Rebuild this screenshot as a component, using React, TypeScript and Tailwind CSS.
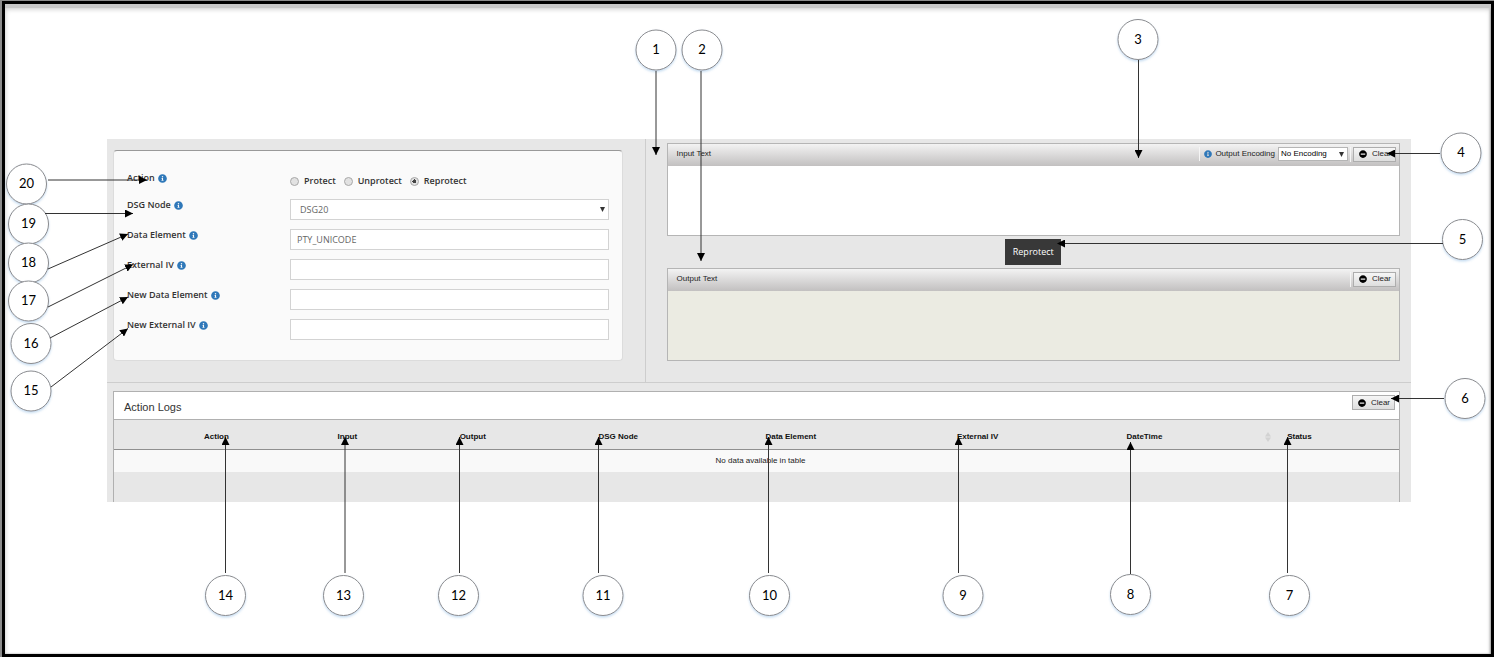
import { useState } from 'react';
import type { ReactNode } from 'react';
import { FaInfoCircle, FaMinusCircle } from 'react-icons/fa';

type Callout = {
  n: number;
  cx: number;
  cy: number;
  from: [number, number];
  to: [number, number];
};

const callouts: Callout[] = [
  { n: 1, cx: 656, cy: 50, from: [656, 71], to: [656, 155] },
  { n: 2, cx: 702, cy: 50, from: [701, 71], to: [701, 261] },
  { n: 3, cx: 1138, cy: 39.5, from: [1138.5, 60], to: [1138.5, 158] },
  { n: 4, cx: 1461, cy: 153, from: [1440, 153.5], to: [1387, 153.5] },
  { n: 5, cx: 1462.5, cy: 239.5, from: [1443, 243.5], to: [1057, 243.5] },
  { n: 6, cx: 1465, cy: 398.5, from: [1444, 398.5], to: [1391, 398.5] },
  { n: 7, cx: 1289.5, cy: 595.5, from: [1287.5, 573], to: [1287.5, 437] },
  { n: 8, cx: 1130.5, cy: 594.5, from: [1130.5, 574], to: [1130.5, 442] },
  { n: 9, cx: 963, cy: 595.5, from: [958.5, 573], to: [958.5, 437] },
  { n: 10, cx: 769.5, cy: 595.5, from: [768.5, 573], to: [768.5, 437] },
  { n: 11, cx: 603, cy: 595.5, from: [598.5, 573], to: [598.5, 437] },
  { n: 12, cx: 458.5, cy: 595.5, from: [459.5, 573], to: [459.5, 437] },
  { n: 13, cx: 343.5, cy: 595.5, from: [345, 573], to: [345, 437] },
  { n: 14, cx: 225.5, cy: 595.5, from: [225.5, 573], to: [225.5, 437] },
  { n: 20, cx: 26.5, cy: 184, from: [48, 180], to: [147, 180] },
  { n: 19, cx: 28.5, cy: 224, from: [45, 213.5], to: [133, 213.5] },
  { n: 18, cx: 28.5, cy: 263, from: [48, 269], to: [128, 234] },
  { n: 17, cx: 28.5, cy: 301, from: [48, 307], to: [133, 264.5] },
  { n: 16, cx: 31, cy: 343.5, from: [50, 338], to: [128, 297] },
  { n: 15, cx: 31, cy: 391, from: [51, 387], to: [128, 328.5] },
];

const columns = [
  { name: 'Action', col: 'w-[17.4%]', cell: 'pl-[90px]' },
  { name: 'Input', col: 'w-[9.5%]', cell: '' },
  { name: 'Output', col: 'w-[10.8%]', cell: '' },
  { name: 'DSG Node', col: 'w-[13%]', cell: '' },
  { name: 'Data Element', col: 'w-[14.9%]', cell: '' },
  { name: 'External IV', col: 'w-[13.2%]', cell: '' },
  { name: 'DateTime', col: 'w-[12.5%]', cell: '' },
  { name: 'Status', col: '', cell: '' },
];

function Callouts() {
  return (
    <svg viewBox="0 0 1494 657" className="pointer-events-none absolute left-0 top-0 w-full">
      <defs>
        <marker id="head" viewBox="0 0 8 8" refX="8" refY="4" markerWidth="8" markerHeight="8" markerUnits="userSpaceOnUse" orient="auto">
          <path d="M0 0 8 4 0 8Z" fill="#000" />
        </marker>
        <filter id="glow" x="-20%" y="-20%" width="140%" height="150%">
          <feDropShadow dx="0" dy="1.5" stdDeviation="1.2" floodColor="#5b9bd5" floodOpacity="0.35" />
        </filter>
      </defs>
      {callouts.map((c) => (
        <g key={c.n}>
          <circle cx={c.cx} cy={c.cy} r="20" fill="#fff" stroke="#8a8b8e" filter="url(#glow)" />
          <text x={c.cx} y={c.cy + 4} textAnchor="middle" className="fill-black font-[Lato,sans-serif] text-[13px]">
            {c.n}
          </text>
        </g>
      ))}
      {callouts.map((c) => (
        <line key={c.n} x1={c.from[0]} y1={c.from[1]} x2={c.to[0]} y2={c.to[1]} stroke="#333" markerEnd="url(#head)" />
      ))}
    </svg>
  );
}

function Info() {
  return <FaInfoCircle className="size-[9px] shrink-0 text-[#2f78b9]" />;
}

function Caret({ className }: { className: string }) {
  return (
    <svg viewBox="0 0 5 5" className={`pointer-events-none absolute size-[5px] ${className}`}>
      <path d="M0 0h5L2.5 5Z" fill="#333" />
    </svg>
  );
}

function ClearButton({ onClick }: { onClick?: () => void }) {
  return (
    <button
      type="button"
      onClick={onClick}
      className="flex h-[15px] w-[43px] items-center justify-between border border-[#adadad] bg-linear-to-b from-[#f6f6f6] to-[#dedede] pl-[5px] pr-1 text-[8px] text-[#222]"
    >
      <FaMinusCircle className="size-2 text-black" />
      Clear
    </button>
  );
}

function Row({ label, id, children }: { label: string; id: string; children: ReactNode }) {
  return (
    <div className="flex items-start">
      <label htmlFor={id} className="flex w-[163px] shrink-0 items-center gap-[3px] leading-3 font-semibold">
        {label} <Info />
      </label>
      <div className="relative flex-1">{children}</div>
    </div>
  );
}

const field = 'block h-[21px] w-full border border-[#d3d3d3] bg-white text-[9px] text-[#666] outline-none';

function SettingsForm({ action, setAction }: { action: string; setAction: (a: string) => void }) {
  return (
    <form className="flex flex-col gap-[9px] rounded-sm border border-[#dcdcdc] border-t-[#999] bg-[#fafafa] pt-[21px] pr-[13px] pb-5 pl-[13px] font-['Open_Sans',sans-serif] text-[9px] text-[#333]">
      <div role="radiogroup" aria-labelledby="action" className="flex h-[18px] items-start">
        <span id="action" className="flex w-[163px] shrink-0 items-center gap-[3px] leading-3 font-semibold">
          Action <Info />
        </span>
        <div className="flex h-[18px] items-center gap-2">
          {['Protect', 'Unprotect', 'Reprotect'].map((a) => (
            <label key={a} className="flex items-center gap-[5px] font-semibold">
              <input
                type="radio"
                name="action"
                checked={action === a}
                onChange={() => setAction(a)}
                className="size-[9px] appearance-none rounded-full border border-[#a8a8a8] bg-[#e2e2e2] checked:bg-[radial-gradient(circle,#444_0_2px,#e2e2e2_2px)]"
              />
              {a}
            </label>
          ))}
        </div>
      </div>
      <Row label="DSG Node" id="node">
        <select id="node" className={`${field} appearance-none pl-[9px]`}>
          <option>DSG20</option>
        </select>
        <Caret className="top-2 right-1" />
      </Row>
      <Row label="Data Element" id="element">
        <input id="element" type="text" defaultValue="PTY_UNICODE" className={`${field} pl-[6px]`} />
      </Row>
      <Row label="External IV" id="iv">
        <input id="iv" type="text" className={`${field} pl-[6px]`} />
      </Row>
      <Row label="New Data Element" id="new-element">
        <input id="new-element" type="text" className={`${field} pl-[6px]`} />
      </Row>
      <Row label="New External IV" id="new-iv">
        <input id="new-iv" type="text" className={`${field} pl-[6px]`} />
      </Row>
    </form>
  );
}

type TextPanelProps = {
  id: string;
  title: string;
  value: string;
  onChange?: (v: string) => void;
  onClear: () => void;
  area: string;
  children?: ReactNode;
};

function TextPanel({ id, title, value, onChange, onClear, area, children }: TextPanelProps) {
  return (
    <section className="border border-[#b5b5b5]">
      <div className="flex h-[22px] items-center bg-linear-to-b from-[#f3f3f3] to-[#c2c0c0] pr-[3px] pb-[2px] pl-[9px]">
        <label htmlFor={id} className="flex-1">{title}</label>
        {children}
        <div className="border-l border-[#f5f5f5] pl-[2px]">
          <ClearButton onClick={onClear} />
        </div>
      </div>
      <textarea
        id={id}
        value={value}
        readOnly={!onChange}
        onChange={(e) => onChange?.(e.target.value)}
        className={`block h-[69px] w-full resize-none p-2 outline-none ${area}`}
      />
    </section>
  );
}

function ActionLogs() {
  return (
    <section className="mr-[11px] ml-[6px] border border-b-0 border-[#b0b0b0] pb-[30px]">
      <div className="flex h-[27px] items-start justify-between bg-white pt-[3px] pr-1 pl-[10px]">
        <h2 className="text-[11px] leading-6 font-medium text-[#333]">Action Logs</h2>
        <ClearButton />
      </div>
      <table className="w-full table-fixed border-collapse">
        <colgroup>
          {columns.map((c) => (
            <col key={c.name} className={c.col} />
          ))}
        </colgroup>
        <thead>
          <tr className="h-[30px] border-t border-b border-t-[#b0b0b0] border-b-[#8f8f8f]">
            {columns.map((c) => (
              <th key={c.name} className={`pt-1 text-left font-bold text-[#111] ${c.cell}`}>
                {c.name === 'DateTime' ? (
                  <span className="flex items-center justify-between pr-4">
                    {c.name}
                    <svg viewBox="0 0 6 10" className="h-[10px] w-[6px]">
                      <path d="M0 4.5h6L3 0ZM0 5.5h6L3 10Z" fill="#d2d2d2" />
                    </svg>
                  </span>
                ) : (
                  c.name
                )}
              </th>
            ))}
          </tr>
        </thead>
        <tbody>
          <tr className="h-[22px] bg-[#f9f9f9]">
            <td colSpan={columns.length} className="pl-2 text-center">No data available in table</td>
          </tr>
        </tbody>
      </table>
    </section>
  );
}

export default function App() {
  const [action, setAction] = useState('Reprotect');
  const [input, setInput] = useState('');
  const [output, setOutput] = useState('');

  return (
    <div className="relative flex min-h-screen flex-col bg-[#8c8c8c] pt-px pl-[2px] font-['Liberation_Sans',Arial,sans-serif] text-[8px] leading-3 text-[#222]">
      <div className="flex-1 border-[3px] border-black bg-white pt-[135px] pr-20 pb-20 pl-[102px] shadow-[inset_0_4px_0_#c8c8c8,inset_0_5px_5px_#c8c8c8,inset_-1px_0_2px_#888]">
        <main className="bg-[#e7e7e7]">
          <div className="flex border-b border-[#cdcdcd]">
            <div className="w-[41.3%] border-r border-[#cdcdcd] pt-[11px] pr-[22px] pb-[21px] pl-[6px]">
              <SettingsForm action={action} setAction={setAction} />
            </div>
            <div className="flex flex-1 flex-col gap-[3px] pt-1 pr-[11px] pl-[21px]">
              <TextPanel id="input" title="Input Text" value={input} onChange={setInput} onClear={() => setInput('')} area="bg-white">
                <div className="mr-[2px] flex items-center gap-[3px] border-l border-[#f5f5f5] pl-1">
                  <FaInfoCircle className="size-2 text-[#2f78b9]" />
                  <label htmlFor="encoding">Output Encoding</label>
                  <div className="relative">
                    <select id="encoding" className="block h-[14px] w-[70px] appearance-none border border-[#b5b5b5] bg-white pl-[2px] text-[8px] text-black outline-none">
                      <option>No Encoding</option>
                    </select>
                    <Caret className="top-[5px] right-1" />
                  </div>
                </div>
              </TextPanel>
              <button
                type="button"
                onClick={() => setOutput(input)}
                className="h-[26px] w-14 self-center bg-[#383838] font-['Open_Sans',sans-serif] text-[9px] text-white"
              >
                {action}
              </button>
              <TextPanel id="output" title="Output Text" value={output} onClear={() => setOutput('')} area="bg-[#ebebe2]" />
            </div>
          </div>
          <div className="pt-2">
            <ActionLogs />
          </div>
        </main>
      </div>
      <Callouts />
    </div>
  );
}
